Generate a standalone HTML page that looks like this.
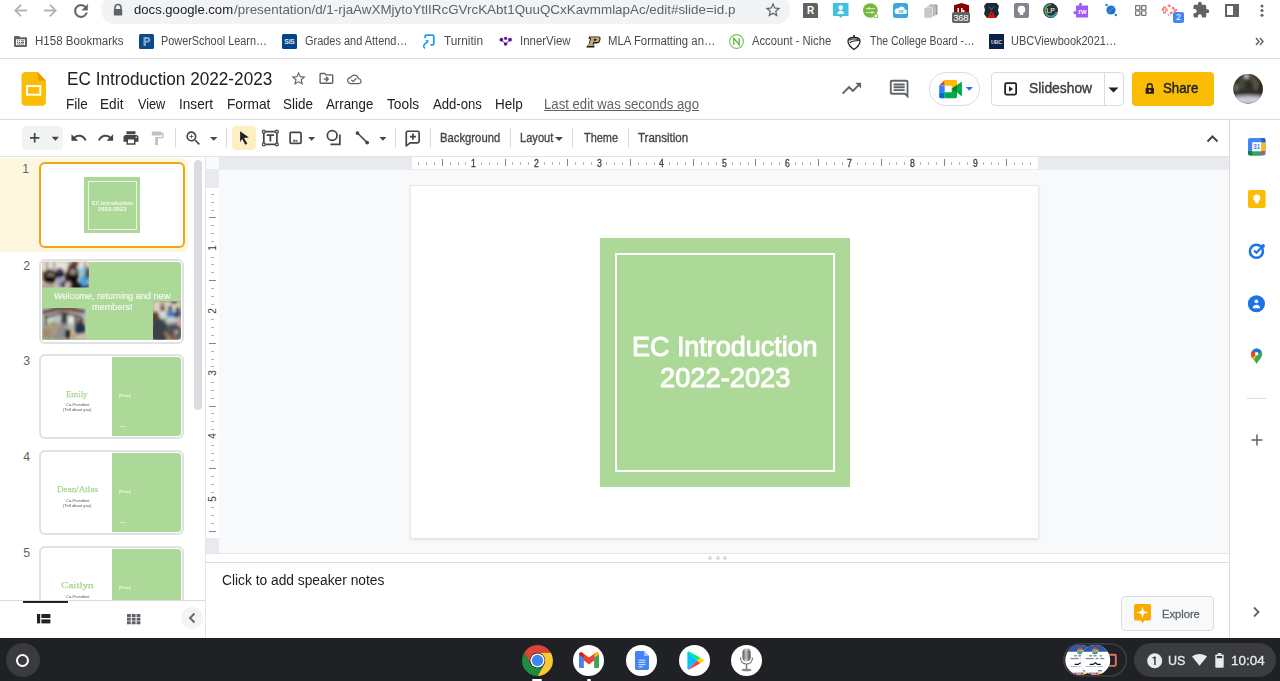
<!DOCTYPE html><html><head><meta charset='utf-8'><style>
*{box-sizing:border-box}
html,body{margin:0;padding:0;width:1280px;height:681px;overflow:hidden;background:#fff;font-family:'Liberation Sans',sans-serif;position:relative}
.a{position:absolute}
.t{position:absolute;line-height:0;white-space:nowrap;transform-origin:0 0}
svg{position:absolute;overflow:visible}
</style></head><body><div class="a" style="left:101px;top:-4px;width:689px;height:28px;border-radius:14px;background:#f1f3f4"></div>
<div class="t" style="left:134.00px;top:10.32px;font-family:'Liberation Sans';font-size:13.5px;font-weight:normal;color:#202124;transform:scaleX(0.9706);">docs.google.com</div>
<div class="t" style="left:234.00px;top:10.32px;font-family:'Liberation Sans';font-size:13.5px;font-weight:normal;color:#5f6368;transform:scaleX(0.9921);">/presentation/d/1-rjaAwXMjytoYtlIRcGVrcKAbt1QuuQCxKavmmlapAc/edit#slide=id.p</div>
<svg style="left:11px;top:1px" width="19" height="19" viewBox="0 0 24 24"><path d="M20 11H7.83l5.59-5.59L12 4l-8 8 8 8 1.41-1.41L7.83 13H20v-2z" fill="#aeb1b5" stroke="#aeb1b5" stroke-width=".4"/></svg>
<svg style="left:41px;top:1px" width="19" height="19" viewBox="0 0 24 24"><path d="M12 4l-1.41 1.41L16.17 11H4v2h12.17l-5.58 5.59L12 20l8-8z" fill="#aeb1b5" stroke="#aeb1b5" stroke-width=".4"/></svg>
<svg style="left:70.5px;top:0.5px" width="20" height="20" viewBox="0 0 24 24"><path d="M17.65 6.35A7.958 7.958 0 0 0 12 4c-4.42 0-7.99 3.58-7.99 8s3.57 8 7.99 8c3.73 0 6.84-2.55 7.73-6h-2.08A5.99 5.99 0 0 1 12 18c-3.31 0-6-2.69-6-6s2.69-6 6-6c1.66 0 3.14.69 4.22 1.78L13 11h7V4l-2.35 2.35z" fill="#5f6368" stroke="#5f6368" stroke-width=".5"/></svg>
<svg style="left:113px;top:4px" width="10" height="12" viewBox="0 0 10 12"><path d="M2 5V3.5a3 3 0 0 1 6 0V5" stroke="#5f6368" stroke-width="1.6" fill="none"/><rect x="0.8" y="5" width="8.4" height="6.6" rx="0.8" fill="#5f6368"/></svg>
<svg style="left:764px;top:1px" width="18" height="18" viewBox="0 0 24 24"><path d="M22 9.24l-7.19-.62L12 2 9.19 8.63 2 9.24l5.46 4.73L5.82 21 12 17.27 18.18 21l-1.63-7.03L22 9.24zM12 15.4l-3.76 2.27 1-4.28-3.32-2.88 4.38-.38L12 6.1l1.71 4.04 4.38.38-3.32 2.88 1 4.28L12 15.4z" fill="#5f6368"/></svg>
<div class="a" style="left:803px;top:3px;width:15px;height:15px;background:#616161;border-radius:1px 2px 0 0"></div>
<div class="a" style="left:803px;top:3px;width:15px;height:15px;color:#fff;font:bold 10px 'Liberation Sans';line-height:15px;text-align:center">R</div>
<svg style="left:833px;top:3px" width="16" height="16" viewBox="0 0 16 16"><path d="M0 0h15.5v13H9.5L7.75 15 6 13H0z" fill="#41c0e4"/><circle cx="7.75" cy="4.6" r="2.3" fill="#fff"/><path d="M4.5 11c0-2.2 1.4-3.6 3.25-3.6S11 8.8 11 11z" fill="#fff"/></svg>
<svg style="left:863px;top:3px" width="16" height="16" viewBox="0 0 16 16"><circle cx="7.3" cy="7.5" r="7.3" fill="#76b83c"/><path d="M3 5.5h9M3 9.5h9" stroke="#d7edc0" stroke-width="0.9"/><circle cx="6" cy="5.5" r="1.1" fill="none" stroke="#d7edc0" stroke-width=".8"/><circle cx="9" cy="9.5" r="1.1" fill="none" stroke="#d7edc0" stroke-width=".8"/><path d="M11 11.5h4v3.5h-4z" fill="#76b83c"/><circle cx="12.8" cy="13" r="1.5" fill="#fff"/></svg>
<svg style="left:893px;top:3px" width="15" height="15" viewBox="0 0 15 15"><rect width="15" height="15" rx="2.5" fill="#3ca7da"/><path d="M3.5 11h8.2a2.3 2.3 0 0 0 .2-4.6A3.3 3.3 0 0 0 5.6 5.5 2.8 2.8 0 0 0 3.5 11z" fill="#fff"/><text x="8" y="9.7" font-size="4.5" font-family="Liberation Sans" fill="#3ca7da" font-weight="bold" text-anchor="middle">ce</text></svg>
<svg style="left:924px;top:3.5px" width="14" height="14" viewBox="0 0 14 14"><rect x="5" y="0.5" width="8.5" height="10.5" rx="1" fill="#9e9e9e"/><rect x="2.6" y="2" width="8.5" height="10.5" rx="1" fill="#b5b5b5" stroke="#fff" stroke-width=".5"/><rect x="0" y="3.5" width="8.5" height="10.5" rx="1" fill="#c8c8c8" stroke="#fff" stroke-width=".5"/></svg>
<svg style="left:953.5px;top:3px" width="15" height="10" viewBox="0 0 15 10"><path d="M0 2.2L7.5 0 15 2.2V10H0z" fill="#8b0000"/><rect x="3.5" y="5" width="1.5" height="5" fill="#fff"/><rect x="7" y="5" width="1.5" height="5" fill="#fff"/><rect x="8.5" y="7" width="2" height="3" fill="#fff"/></svg>
<div class="a" style="left:951.5px;top:12px;width:18.5px;height:11px;background:#5f6368;border-radius:2px;color:#fff;font:9.5px 'Liberation Sans';line-height:11px;text-align:center;letter-spacing:-0.3px">368</div>
<svg style="left:983.5px;top:3px" width="15" height="15" viewBox="0 0 15 15"><path d="M2.5 0h10l2.5 3-1 4 1 4-3 4H3L0 11l1-4-1-4z" fill="#1c2a33"/><path d="M7.5 7.5L12 15H3z" fill="#e01010"/><path d="M7.5 10.5v2" stroke="#1c2a33" stroke-width="1"/><path d="M5 3.5l2.5 3 2.5-3" stroke="#6b7880" stroke-width=".8" fill="none"/></svg>
<svg style="left:1013.5px;top:3px" width="15" height="15" viewBox="0 0 15 15"><rect width="15" height="15" rx="2" fill="#80868b"/><circle cx="7.5" cy="6.5" r="3.8" fill="#fff"/><rect x="5.8" y="9.5" width="3.4" height="2.5" fill="#fff"/></svg>
<svg style="left:1043px;top:3px" width="16" height="16" viewBox="0 0 16 16"><circle cx="7.6" cy="7.5" r="7.4" fill="#2d3236"/><path d="M8 1.6A5.9 5.9 0 1 0 13.6 9" stroke="#4fd05c" stroke-width="1.3" fill="none"/><path d="M13.6 9A5.9 5.9 0 0 1 4 12.2" stroke="#2ea0c8" stroke-width="1.3" fill="none"/><text x="7.6" y="10.3" font-size="7" font-family="Liberation Sans" fill="#fff" text-anchor="middle">LP</text></svg>
<svg style="left:1073px;top:3px" width="16" height="16" viewBox="0 0 16 16"><path d="M3 2.5h3.6a1.5 1.5 0 1 1 1.8 0H15v12H3v-3.8a1.5 1.5 0 1 1 0-2.2z" fill="#a35bf5"/><text x="9.3" y="11.3" font-size="7" font-weight="bold" font-family="Liberation Sans" fill="#fff" text-anchor="middle">rw</text></svg>
<svg style="left:1105px;top:3px" width="13" height="14" viewBox="0 0 13 14"><circle cx="6" cy="7" r="4.6" fill="#1f74c4"/><path d="M2.5 10.5L9.5 3.5" stroke="#6fb0e8" stroke-width=".6"/><circle cx="1.5" cy="2" r="1.3" fill="#1f8ad4"/><circle cx="10.8" cy="12" r="1.3" fill="#1f8ad4"/></svg>
<svg style="left:1135px;top:5px" width="12" height="11" viewBox="0 0 12 11"><g fill="none" stroke="#6f7378" stroke-width="1.2"><rect x=".6" y=".6" width="4.3" height="4.3" rx=".5"/><rect x="6.6" y=".6" width="4.3" height="4.3" rx=".5"/><rect x=".6" y="6" width="4.3" height="4.3" rx=".5"/><rect x="6.6" y="6" width="4.3" height="4.3" rx=".5"/></g></svg>
<svg style="left:1163px;top:4px" width="14" height="12" viewBox="0 0 14 12"><path d="M0 3.5h3.5V8.5H0zM5 1l8 5-8 5" fill="none" stroke="#ff7b7b" stroke-width="2.2" stroke-dasharray="3 1.5"/></svg>
<div class="a" style="left:1173px;top:12px;width:11px;height:11px;background:#4285f4;border-radius:2px;color:#fff;font:9px 'Liberation Sans';line-height:11px;text-align:center">2</div>
<svg style="left:1192px;top:1px" width="18" height="18" viewBox="0 0 24 24"><path d="M20.5 11H19V7c0-1.1-.9-2-2-2h-4V3.5a2.5 2.5 0 0 0-5 0V5H4c-1.1 0-1.99.9-1.99 2v3.8H3.5c1.49 0 2.7 1.21 2.7 2.7s-1.21 2.7-2.7 2.7H2V20c0 1.1.9 2 2 2h3.8v-1.5c0-1.49 1.21-2.7 2.7-2.7 1.49 0 2.7 1.21 2.7 2.7V22H17c1.1 0 2-.9 2-2v-4h1.5a2.5 2.5 0 0 0 0-5z" fill="#5f6368"/></svg>
<svg style="left:1224.5px;top:4px" width="14" height="13" viewBox="0 0 14 13"><rect x="1" y="1" width="12" height="11" fill="none" stroke="#5f6368" stroke-width="2"/><rect x="8" y="1" width="5" height="11" fill="#5f6368"/></svg>
<svg style="left:1259.5px;top:4px" width="4" height="14" viewBox="0 0 4 14"><circle cx="2" cy="2" r="1.5" fill="#5f6368"/><circle cx="2" cy="6.6" r="1.5" fill="#5f6368"/><circle cx="2" cy="11.2" r="1.5" fill="#5f6368"/></svg>
<div class="a" style="left:0;top:58px;width:1280px;height:1px;background:#dadce0"></div>
<div class="t" style="left:35.04px;top:40.84px;font-family:'Liberation Sans';font-size:12px;font-weight:normal;color:#474a4e;transform:scaleX(0.9626);">H158 Bookmarks</div>
<div class="t" style="left:160.69px;top:40.84px;font-family:'Liberation Sans';font-size:12px;font-weight:normal;color:#474a4e;transform:scaleX(0.9070);">PowerSchool Learn…</div>
<div class="t" style="left:304.60px;top:40.84px;font-family:'Liberation Sans';font-size:12px;font-weight:normal;color:#474a4e;transform:scaleX(0.9135);">Grades and Attend…</div>
<div class="t" style="left:444.30px;top:40.84px;font-family:'Liberation Sans';font-size:12px;font-weight:normal;color:#474a4e;transform:scaleX(0.9846);">Turnitin</div>
<div class="t" style="left:519.85px;top:40.84px;font-family:'Liberation Sans';font-size:12px;font-weight:normal;color:#474a4e;transform:scaleX(0.9519);">InnerView</div>
<div class="t" style="left:607.55px;top:40.84px;font-family:'Liberation Sans';font-size:12px;font-weight:normal;color:#474a4e;transform:scaleX(0.9468);">MLA Formatting an…</div>
<div class="t" style="left:752.20px;top:40.84px;font-family:'Liberation Sans';font-size:12px;font-weight:normal;color:#474a4e;transform:scaleX(0.9341);">Account - Niche</div>
<div class="t" style="left:870.00px;top:40.84px;font-family:'Liberation Sans';font-size:12px;font-weight:normal;color:#474a4e;transform:scaleX(0.8754);">The College Board -…</div>
<div class="t" style="left:1010.89px;top:40.84px;font-family:'Liberation Sans';font-size:12px;font-weight:normal;color:#474a4e;transform:scaleX(0.9132);">UBCViewbook2021…</div>
<svg style="left:14px;top:35.5px" width="13" height="11" viewBox="0 0 13 11"><path d="M0 1.2C0 .5.5 0 1.2 0h3.8l1.3 1.3h5.5c.7 0 1.2.5 1.2 1.2v7.3c0 .7-.5 1.2-1.2 1.2H1.2C.5 11 0 10.5 0 9.8z" fill="#5f6368"/><rect x="2" y="3.3" width="9" height="5.8" fill="#fff"/><g fill="#5f6368"><rect x="3" y="4.3" width="1.2" height="1"/><rect x="5" y="4.3" width="1.2" height="1"/><rect x="7" y="4.3" width="3" height="1"/><rect x="3" y="6" width="1.2" height="1"/><rect x="5" y="6" width="1.2" height="1"/><rect x="7" y="6" width="3" height="1"/><rect x="3" y="7.6" width="7" height=".8"/></g></svg>
<svg style="left:139px;top:34px" width="15" height="15" viewBox="0 0 15 15"><rect width="15" height="15" rx="1.5" fill="#0b4b8c"/><path d="M4.5 3h4a2.8 2.8 0 0 1 0 5.6H7V12H4.5z M7 5v1.7h1.3a.85.85 0 0 0 0-1.7z" fill="#7ea6cf" fill-rule="evenodd"/></svg>
<svg style="left:281.5px;top:33.8px" width="15" height="15" viewBox="0 0 15 15"><rect width="15" height="15" rx="1.5" fill="#004585"/><text x="7.5" y="10.2" font-size="6.8" font-weight="bold" font-family="Liberation Sans" fill="#dde6f0" text-anchor="middle" letter-spacing="-.2">SIS</text></svg>
<svg style="left:423px;top:34px" width="12" height="15" viewBox="0 0 12 15"><path d="M2.2 3.6V2.2c0-.6.4-1 1-1h6.6c.6 0 1 .4 1 1V9.8c0 .6-.4 1-1 1H8" stroke="#1ba1f7" stroke-width="1.8" fill="none" stroke-linecap="round"/><path d="M1.5 14C0 12.5.5 10.5 3.5 8.5" stroke="#1ba1f7" stroke-width="1.6" fill="none" stroke-linecap="round"/><path d="M2.2 6.2L5.6 6 5 9.5z" fill="#1ba1f7"/></svg>
<svg style="left:499px;top:36px" width="14" height="10" viewBox="0 0 14 10"><g fill="#5e1597"><circle cx="2.4" cy="3.7" r="1.9"/><circle cx="6.6" cy="2.3" r="1.6"/><circle cx="11" cy="3.7" r="1.9"/><circle cx="6.6" cy="8" r="1.8"/></g><path d="M2.4 3.7L6.6 8 11 3.7" stroke="#5e1597" stroke-width=".9" fill="none"/></svg>
<svg style="left:586px;top:35.5px" width="15" height="12" viewBox="0 0 15 12"><path d="M3 .5h9.5c1.8 0 2.3 1.2 2 2.6l-.3 1.4c-.4 1.9-1.6 2.9-3.8 2.9H8l-.6 2.2h1.2L8.2 11.5H.5l.5-1.9h1.3L4 3H2.6z" fill="#1a1a1a"/><path d="M4 1.3h8.2c1.2 0 1.5.7 1.3 1.7l-.25 1.2c-.3 1.3-1 1.9-2.6 1.9H7.3l-.7 2.8h1.1l-.3 1.2H1.5l.25-1.1h1.2L5.2 2.2H3.8z M8.2 2.7L7.7 4.8h1.6c.6 0 .9-.3 1-.8l.15-.5c.1-.5-.1-.8-.6-.8z" fill="#c5a96f" fill-rule="evenodd"/></svg>
<svg style="left:729px;top:33.8px" width="15" height="15" viewBox="0 0 15 15"><circle cx="7.5" cy="7.5" r="6.9" fill="none" stroke="#72c45a" stroke-width="1.1"/><path d="M4.8 11V4.2L10.2 11V4.2" fill="none" stroke="#5ab548" stroke-width="1.3"/></svg>
<svg style="left:847px;top:33.5px" width="14" height="16" viewBox="0 0 14 16"><path d="M7 3.5C3.8 3.5 1 4.8 1 7.2c0 3 2.7 6 6 8.3 3.3-2.3 6-5.3 6-8.3C13 4.8 10.2 3.5 7 3.5z" fill="none" stroke="#222" stroke-width="1.3"/><path d="M2.3 6.3C3 5.4 5 5 7 5s4 .4 4.7 1.3C10.5 6.8 8.8 7 7 7 4.8 7 3.5 7.8 3 9" fill="none" stroke="#222" stroke-width="1.1"/><path d="M6.5 3.5L7.5 1" stroke="#222" stroke-width="1.6"/></svg>
<svg style="left:989px;top:33.8px" width="15" height="15" viewBox="0 0 15 15"><rect width="15" height="15" fill="#0c2148"/><text x="7.5" y="9.8" font-size="5.6" font-weight="bold" font-family="Liberation Sans" fill="#c8d0dc" text-anchor="middle" letter-spacing="-.3">UBC</text></svg>
<svg style="left:1255px;top:36.5px" width="10" height="9" viewBox="0 0 10 9"><path d="M1 1l3 3.5L1 8M5 1l3 3.5L5 8" fill="none" stroke="#5f6368" stroke-width="1.5"/></svg>
<div class="t" style="left:67.06px;top:78.69px;font-family:'Liberation Sans';font-size:18.2px;font-weight:normal;color:#202124;transform:scaleX(0.9444);">EC Introduction 2022-2023</div>
<div class="t" style="left:66.07px;top:103.58px;font-family:'Liberation Sans';font-size:14.5px;font-weight:normal;color:#202124;transform:scaleX(0.9318);">File</div>
<div class="t" style="left:100.31px;top:103.58px;font-family:'Liberation Sans';font-size:14.5px;font-weight:normal;color:#202124;transform:scaleX(0.9375);">Edit</div>
<div class="t" style="left:137.50px;top:103.58px;font-family:'Liberation Sans';font-size:14.5px;font-weight:normal;color:#202124;transform:scaleX(0.8750);">View</div>
<div class="t" style="left:179.06px;top:103.58px;font-family:'Liberation Sans';font-size:14.5px;font-weight:normal;color:#202124;transform:scaleX(0.9375);">Insert</div>
<div class="t" style="left:226.56px;top:103.58px;font-family:'Liberation Sans';font-size:14.5px;font-weight:normal;color:#202124;transform:scaleX(0.9444);">Format</div>
<div class="t" style="left:282.82px;top:103.58px;font-family:'Liberation Sans';font-size:14.5px;font-weight:normal;color:#202124;transform:scaleX(0.9274);">Slide</div>
<div class="t" style="left:326.25px;top:103.58px;font-family:'Liberation Sans';font-size:14.5px;font-weight:normal;color:#202124;transform:scaleX(0.9167);">Arrange</div>
<div class="t" style="left:387.20px;top:103.58px;font-family:'Liberation Sans';font-size:14.5px;font-weight:normal;color:#202124;transform:scaleX(0.9471);">Tools</div>
<div class="t" style="left:433.40px;top:103.58px;font-family:'Liberation Sans';font-size:14.5px;font-weight:normal;color:#202124;transform:scaleX(0.9056);">Add-ons</div>
<div class="t" style="left:495.07px;top:103.58px;font-family:'Liberation Sans';font-size:14.5px;font-weight:normal;color:#202124;transform:scaleX(0.9310);">Help</div>
<div class="t" style="left:543.70px;top:103.58px;font-family:'Liberation Sans';font-size:14.5px;font-weight:normal;color:#5f6368;transform:scaleX(0.9070);text-decoration:underline;">Last edit was seconds ago</div>
<div class="a" style="left:0;top:119px;width:1280px;height:1px;background:#dadce0"></div>
<div class="a" style="left:929px;top:72px;width:51px;height:34px;border-radius:17px;border:1px solid #dadce0"></div>
<div class="a" style="left:991px;top:72px;width:133px;height:34px;border-radius:4px;border:1px solid #dadce0"></div>
<div class="a" style="left:1104px;top:72px;width:1px;height:34px;background:#dadce0"></div>
<div class="t" style="left:1029.25px;top:87.95px;font-family:'Liberation Sans';font-size:14px;font-weight:normal;color:#3c4043;transform:scaleX(0.9883);-webkit-text-stroke:0.4px #3c4043;">Slideshow</div>
<div class="a" style="left:1132px;top:72px;width:82px;height:34px;border-radius:4px;background:#fbbc04"></div>
<div class="t" style="left:1162.75px;top:87.95px;font-family:'Liberation Sans';font-size:14px;font-weight:normal;color:#202124;transform:scaleX(0.9459);-webkit-text-stroke:0.4px #202124;">Share</div>
<svg style="left:1228px;top:70px" width="40" height="38" viewBox="0 0 717 681"><defs><clipPath id="avc"><circle cx="360" cy="338" r="265"/></clipPath><filter id="avb" x="-20%" y="-20%" width="140%" height="140%"><feGaussianBlur stdDeviation="30"/></filter></defs><g clip-path="url(#avc)"><rect x="0" y="0" width="717" height="681" fill="#35342c"/><g filter="url(#avb)"><ellipse cx="330" cy="110" rx="40" ry="50" fill="#c8ccd0"/><ellipse cx="420" cy="150" rx="60" ry="80" fill="#5a4a38"/><ellipse cx="250" cy="230" rx="50" ry="120" fill="#4a4a3a"/><ellipse cx="500" cy="260" rx="40" ry="100" fill="#5a5a48"/><ellipse cx="150" cy="320" rx="40" ry="80" fill="#6a6e68"/><ellipse cx="380" cy="250" rx="30" ry="90" fill="#2a2620"/><ellipse cx="580" cy="330" rx="40" ry="90" fill="#28261e"/><rect x="100" y="380" width="520" height="80" fill="#2e2a22"/><path d="M60 470Q360 430 660 470V681H60z" fill="#aab0b8"/><path d="M120 520Q360 490 600 520V560Q360 540 120 560z" fill="#dde2e8"/><path d="M150 590Q360 570 570 590V620H150z" fill="#c0c6ce"/></g></g></svg>
<svg style="left:0;top:55px" width="140" height="70" viewBox="0 0 1280 640"><path d="M230 155h115l75 80v195c0 19-16 35-35 35H232c-19 0-35-16-35-35V190c0-19 16-35 33-35z" fill="#fbbc04"/><path d="M345 155l75 80h-55c-11 0-20-9-20-20z" fill="#f29900"/><rect x="247" y="284" width="122" height="79" fill="none" stroke="#fff" stroke-width="18"/></svg>
<svg style="left:289.6px;top:69.8px" width="17.2" height="17.2" viewBox="0 0 24 24"><path d="M22 9.24l-7.19-.62L12 2 9.19 8.63 2 9.24l5.46 4.73L5.82 21 12 17.27 18.18 21l-1.63-7.03L22 9.24zM12 15.4l-3.76 2.27 1-4.28-3.32-2.88 4.38-.38L12 6.1l1.71 4.04 4.38.38-3.32 2.88 1 4.28L12 15.4z" fill="#5f6368"/></svg>
<svg style="left:317.6px;top:70.3px" width="16.8" height="16.8" viewBox="0 0 24 24"><path d="M20 6h-8l-2-2H4c-1.1 0-1.99.9-1.99 2L2 18c0 1.1.9 2 2 2h16c1.1 0 2-.9 2-2V8c0-1.1-.9-2-2-2zm0 12H4V6h5.17l2 2H20v10zm-7.84-6H8v2h4.16l-1.59 1.59L11.99 17 16 13.01 11.99 9l-1.41 1.41L12.16 12z" fill="#5f6368"/></svg>
<svg style="left:347.2px;top:71.5px" width="14.7" height="14.7" viewBox="0 0 24 24"><path d="M19.35 10.04A7.49 7.49 0 0 0 12 4C9.11 4 6.6 5.64 5.35 8.04A5.994 5.994 0 0 0 0 14c0 3.31 2.69 6 6 6h13c2.76 0 5-2.24 5-5 0-2.64-2.05-4.78-4.65-4.96zM19 18H6c-2.21 0-4-1.790-4-4 0-2.05 1.53-3.76 3.56-3.970l1.07-.11.5-.95A5.469 5.469 0 0 1 12 6c2.62 0 4.88 1.86 5.39 4.43l.3 1.5 1.53.11A2.98 2.98 0 0 1 22 15c0 1.65-1.35 3-3 3zm-9-3.82l-2.09-2.09L6.5 13.5 10 17l6.01-6.01-1.41-1.41z" fill="#5f6368"/></svg>
<svg style="left:839.8px;top:77.1px" width="23" height="23" viewBox="0 0 24 24"><path d="M16 6l2.29 2.29-4.88 4.88-4-4L2 16.59 3.41 18l6-6 4 4 6.3-6.29L22 12V6z" fill="#5f6368"/></svg>
<svg style="left:887.9px;top:77.9px" width="22.3" height="22.3" viewBox="0 0 24 24"><path d="M21.99 4c0-1.1-.89-2-1.99-2H4c-1.1 0-2 .9-2 2v12c0 1.1.9 2 2 2h14l4 4-.01-18zM20 4v13.17L18.83 16H4V4h16zM6 12h12v2H6zm0-3h12v2H6zm0-3h12v2H6z" fill="#5f6368"/></svg>
<svg style="left:935px;top:75px" width="50" height="30" viewBox="0 0 1135 681"><path d="M220 115L95 235h125z" fill="#ea4335"/><path d="M220 115h250c17 0 30 13 30 30v80l-120 85v-65H220z" fill="#ffba00"/><path d="M95 235h125v165H95z" fill="#2684fc"/><path d="M95 400h125v125h-95c-17 0-30-13-30-30z" fill="#0066da"/><path d="M220 390h160v-80l120-85v270c0 17-13 30-30 30H220z" fill="#00ac47"/><path d="M380 310l120-85v175z" fill="#00832d"/><path d="M500 225l110-75v340l-110-90z" fill="#00ac47"/><path d="M700 275h160l-80 80z" fill="#1a73e8"/></svg>
<svg style="left:995px;top:75px" width="30" height="30" viewBox="0 0 681 681"><rect x="230" y="185" width="250" height="260" rx="28" fill="none" stroke="#202124" stroke-width="40"/><path d="M318 255v125l92-62z" fill="#202124"/></svg>
<svg style="left:1104px;top:72px" width="20" height="34" viewBox="0 0 20 34"><path d="M4.5 15.5h10l-5 5z" fill="#202124"/></svg>
<svg style="left:1144px;top:82px" width="12" height="13" viewBox="0 0 12 13"><path d="M3.4 6.5V4.2a2.4 2.4 0 0 1 4.8 0v2.3" fill="none" stroke="#202124" stroke-width="1.4"/><rect x="1.6" y="6.1" width="8.4" height="5.65" rx=".6" fill="#202124"/><circle cx="5.8" cy="8.9" r="1.1" fill="#fbbc04"/></svg>
<div class="a" style="left:22px;top:126px;width:41px;height:24px;border-radius:4px;background:#f1f3f4"></div>
<div class="a" style="left:232px;top:126px;width:24px;height:24px;border-radius:4px;background:#feefc3"></div>
<div class="a" style="left:175px;top:128px;width:1px;height:20px;background:#dadce0"></div>
<div class="a" style="left:226px;top:128px;width:1px;height:20px;background:#dadce0"></div>
<div class="a" style="left:395px;top:128px;width:1px;height:20px;background:#dadce0"></div>
<div class="a" style="left:430px;top:128px;width:1px;height:20px;background:#dadce0"></div>
<div class="a" style="left:510px;top:128px;width:1px;height:20px;background:#dadce0"></div>
<div class="a" style="left:572px;top:128px;width:1px;height:20px;background:#dadce0"></div>
<div class="a" style="left:628px;top:128px;width:1px;height:20px;background:#dadce0"></div>
<div class="t" style="left:439.93px;top:137.50px;font-family:'Liberation Sans';font-size:13px;font-weight:normal;color:#444746;transform:scaleX(0.8676);-webkit-text-stroke:0.35px #444746;">Background</div>
<div class="t" style="left:520.45px;top:137.50px;font-family:'Liberation Sans';font-size:13px;font-weight:normal;color:#444746;transform:scaleX(0.8538);-webkit-text-stroke:0.35px #444746;">Layout</div>
<div class="t" style="left:584.00px;top:137.50px;font-family:'Liberation Sans';font-size:13px;font-weight:normal;color:#444746;transform:scaleX(0.8400);-webkit-text-stroke:0.35px #444746;">Theme</div>
<div class="t" style="left:638.40px;top:137.50px;font-family:'Liberation Sans';font-size:13px;font-weight:normal;color:#444746;transform:scaleX(0.8857);-webkit-text-stroke:0.35px #444746;">Transition</div>
<div class="a" style="left:0;top:156px;width:1229px;height:1px;background:#e0e2e6"></div>
<svg style="left:20px;top:125px" width="100" height="27" viewBox="0 0 1280 345.6"><path d="M177 103h22v50h49v22h-49v50h-22v-50h-49v-22h49z" fill="#444746"/><path d="M405 150h95l-47.5 50z" fill="#444746"/></svg>
<svg style="left:69.5px;top:128.5px" width="17.6" height="17.6" viewBox="0 0 24 24"><path d="M12.5 8c-2.65 0-5.05.99-6.9 2.6L2 7v9h9l-3.62-3.62c1.39-1.16 3.16-1.880 5.12-1.88 3.54 0 6.55 2.31 7.6 5.5l2.37-.78C21.08 11.03 17.15 8 12.5 8z" fill="#444746"/></svg>
<svg style="left:96.5px;top:128.5px" width="17.6" height="17.6" viewBox="0 0 24 24"><path d="M18.4 10.6C16.55 8.99 14.15 8 11.5 8c-4.65 0-8.58 3.03-9.960 7.22L3.9 16c1.05-3.19 4.05-5.5 7.6-5.5 1.95 0 3.73.72 5.12 1.88L13 16h9V7l-3.6 3.6z" fill="#444746"/></svg>
<svg style="left:122.4px;top:128.9px" width="18" height="18" viewBox="0 0 24 24"><path d="M19 8H5c-1.66 0-3 1.34-3 3v6h4v4h12v-4h4v-6c0-1.66-1.34-3-3-3zm-3 11H8v-5h8v5zm3-7c-.55 0-1-.45-1-1s.45-1 1-1 1 .45 1 1-.45 1-1 1zm-1-9H6v4h12V3z" fill="#444746"/></svg>
<svg style="left:149.2px;top:129.9px" width="16.5" height="16.5" viewBox="0 0 24 24"><path d="M18 4V3c0-.55-.45-1-1-1H5c-.55 0-1 .45-1 1v4c0 .55.45 1 1 1h12c.55 0 1-.45 1-1V6h1v4H9v11c0 .55.45 1 1 1h2c.55 0 1-.45 1-1v-9h8V4h-3z" fill="#bdc1c6"/></svg>
<svg style="left:184.4px;top:128.7px" width="18.7" height="18.7" viewBox="0 0 24 24"><path d="M15.5 14h-.79l-.28-.27A6.471 6.471 0 0 0 16 9.5 6.5 6.5 0 1 0 9.5 16c1.61 0 3.09-.59 4.23-1.57l.27.28v.79l5 4.99L20.49 19l-4.99-5zm-6 0C7.01 14 5 11.990 5 9.5S7.01 5 9.5 5 14 7.01 14 9.5 11.99 14 9.5 14zm2.5-4h-2v2H9v-2H7V9h2V7h1v2h2v1z" fill="#444746"/></svg>
<svg style="left:210px;top:137px" width="8" height="4" viewBox="0 0 8 4"><path d="M0 0h7.4L3.7 3.7z" fill="#444746"/></svg>
<svg style="left:228px;top:125px" width="100" height="27" viewBox="0 0 1280 345.6"><path d="M155 80L268 160 205 165 248 240 222 252 182 180 155 218z" fill="#202124"/><rect x="458" y="85" width="168" height="163" fill="none" stroke="#444746" stroke-width="22"/><g fill="#fff" stroke="#444746" stroke-width="16"><circle cx="458" cy="85" r="18"/><circle cx="626" cy="85" r="18"/><circle cx="458" cy="248" r="18"/><circle cx="626" cy="248" r="18"/></g><path d="M495 118h95v22h-36v70h-23v-70h-36z" fill="#444746"/><rect x="795" y="95" width="140" height="140" rx="14" fill="none" stroke="#444746" stroke-width="22"/><path d="M825 210l20-28 18 20 14-14 22 22z" fill="#444746"/><path d="M1025 155h90l-45 45z" fill="#444746"/></svg>
<svg style="left:325px;top:125px" width="100" height="27" viewBox="0 0 1280 345.6"><circle cx="92" cy="135" r="62" fill="none" stroke="#444746" stroke-width="22"/><path d="M190 122v125H70" fill="none" stroke="#444746" stroke-width="22"/><path d="M415 103L540 225" stroke="#444746" stroke-width="20"/><circle cx="415" cy="103" r="24" fill="#444746"/><circle cx="540" cy="225" r="24" fill="#444746"/><path d="M697 155h90l-45 45z" fill="#444746"/><path d="M1055 80h130c11 0 20 9 20 20v108c0 11-9 20-20 20H1090l-50 40V100c0-11 9-20 20-20z" fill="none" stroke="#444746" stroke-width="22" stroke-linejoin="round"/><path d="M1114 110h22v28h28v22h-28v28h-22v-28h-28v-22h28z" fill="#444746"/></svg>
<svg style="left:555px;top:137px" width="8" height="4" viewBox="0 0 8 4"><path d="M0 0h8L4 4z" fill="#444746"/></svg>
<svg style="left:1206px;top:133.5px" width="13" height="9" viewBox="0 0 13 9"><path d="M1.5 7.5L6.5 2.5l5 5" fill="none" stroke="#444746" stroke-width="2"/></svg>
<div class="a" style="left:1229px;top:120px;width:1px;height:518px;background:#dadce0"></div>
<div class="a" style="left:0;top:158px;width:188px;height:94px;background:#fef7e0;border-radius:0 6px 6px 0"></div>
<div class="a" style="left:205px;top:157px;width:1px;height:481px;background:#e3e5e8"></div>
<div class="a" style="left:0;top:600px;width:205px;height:1px;background:#dadce0"></div>
<div class="a" style="left:194px;top:160px;width:8px;height:250px;border-radius:4px;background:#dadce0"></div>
<div class="a" style="left:38.8px;top:162px;width:146px;height:86.3px;border:2px solid #eea616;border-radius:6px;background:#fff"></div>
<div class="a" style="left:84.4px;top:177.1px;width:55.9px;height:56.3px;background:#acd998"></div>
<div class="a" style="left:87.8px;top:180.5px;width:49.1px;height:49.5px;border:1px solid rgba(255,255,255,.75)"></div>
<div class="t" style="left:91.90px;top:202.86px;font-family:'Liberation Sans';font-size:5.6px;font-weight:bold;color:#f4faf0;transform:scaleX(0.9762);">EC Introduction</div>
<div class="t" style="left:98.00px;top:208.86px;font-family:'Liberation Sans';font-size:5.6px;font-weight:bold;color:#f4faf0;transform:scaleX(1.0630);">2022-2023</div>
<div class="t" style="left:22.20px;top:169.44px;font-family:'Liberation Sans';font-size:12.3px;font-weight:normal;color:#5f6368;">1</div>
<div class="t" style="left:23.20px;top:266.04px;font-family:'Liberation Sans';font-size:12.3px;font-weight:normal;color:#5f6368;">2</div>
<div class="t" style="left:23.20px;top:361.34px;font-family:'Liberation Sans';font-size:12.3px;font-weight:normal;color:#5f6368;">3</div>
<div class="t" style="left:23.20px;top:457.14px;font-family:'Liberation Sans';font-size:12.3px;font-weight:normal;color:#5f6368;">4</div>
<div class="t" style="left:23.20px;top:553.24px;font-family:'Liberation Sans';font-size:12.3px;font-weight:normal;color:#5f6368;">5</div>
<div class="a" style="left:39.2px;top:259.1px;width:144.8px;height:85px;border:2px solid #dfe1e5;border-radius:6px;background:#fff"></div>
<div class="a" style="left:39.2px;top:354.4px;width:144.8px;height:85px;border:2px solid #dfe1e5;border-radius:6px;background:#fff"></div>
<div class="a" style="left:39.2px;top:450.2px;width:144.8px;height:85px;border:2px solid #dfe1e5;border-radius:6px;background:#fff"></div>
<div class="a" style="left:39.2px;top:546.3px;width:144.8px;height:85px;border:2px solid #dfe1e5;border-radius:6px;background:#fff"></div>
<div class="a" style="left:42.1px;top:261.8px;width:138.7px;height:78px;background:#acd998;border-radius:0 3px 3px 0"></div>
<svg style="left:40px;top:260px" width="52" height="30" viewBox="0 0 1180 681"><defs><clipPath id="c1"><rect x="47" y="40" width="1066" height="586"/></clipPath><filter id="bl1" x="-10%" y="-10%" width="120%" height="120%"><feGaussianBlur stdDeviation="32"/></filter></defs><g clip-path="url(#c1)"><rect x="0" y="0" width="1180" height="681" fill="#cfc2ae"/><g filter="url(#bl1)"><rect x="47" y="40" width="1066" height="200" fill="#e9e2d6"/><rect x="140" y="40" width="40" height="300" fill="#777"/><rect x="300" y="40" width="40" height="250" fill="#888"/><rect x="640" y="40" width="40" height="250" fill="#777"/><rect x="1000" y="40" width="40" height="300" fill="#777"/><ellipse cx="80" cy="300" rx="40" ry="60" fill="#c07040"/><ellipse cx="220" cy="380" rx="150" ry="170" fill="#231e1b"/><ellipse cx="240" cy="340" rx="80" ry="50" fill="#8a7868"/><ellipse cx="225" cy="460" rx="110" ry="90" fill="#101010"/><ellipse cx="180" cy="600" rx="160" ry="80" fill="#b3a48f"/><ellipse cx="445" cy="300" rx="100" ry="120" fill="#1e1a1c"/><ellipse cx="430" cy="262" rx="60" ry="25" fill="#5b3fc8"/><ellipse cx="430" cy="345" rx="70" ry="50" fill="#151515"/><ellipse cx="470" cy="510" rx="100" ry="120" fill="#9fa2c0"/><ellipse cx="520" cy="560" rx="50" ry="70" fill="#3a3040"/><ellipse cx="600" cy="420" rx="40" ry="120" fill="#2a2224"/><ellipse cx="740" cy="320" rx="140" ry="230" fill="#2a2220"/><ellipse cx="745" cy="270" rx="70" ry="70" fill="#a08878"/><ellipse cx="745" cy="430" rx="110" ry="100" fill="#0d0d0d"/><ellipse cx="870" cy="590" rx="250" ry="90" fill="#141418"/><ellipse cx="790" cy="90" rx="90" ry="60" fill="#5a3a2e"/><ellipse cx="950" cy="250" rx="80" ry="70" fill="#7ccbe8"/><ellipse cx="1000" cy="470" rx="95" ry="130" fill="#4aa2e2"/><ellipse cx="1080" cy="300" rx="40" ry="150" fill="#3a3030"/><ellipse cx="640" cy="560" rx="60" ry="70" fill="#c8b8a8"/></g></g></svg>
<svg style="left:40px;top:306px" width="50" height="36" viewBox="0 0 946 681"><defs><clipPath id="c2"><rect x="45" y="40" width="815" height="600"/></clipPath><filter id="bl2" x="-10%" y="-10%" width="120%" height="120%"><feGaussianBlur stdDeviation="26"/></filter></defs><g clip-path="url(#c2)"><rect x="0" y="0" width="946" height="681" fill="#b8b4aa"/><g filter="url(#bl2)"><path d="M45 40h815v280H45z" fill="#b9c4c6"/><path d="M200 170L440 110 700 170 440 150z" fill="#d8e2e4"/><path d="M260 60L320 180M560 60L600 170" stroke="#e0e8ea" stroke-width="30"/><rect x="520" y="200" width="120" height="130" fill="#e4ecec"/><rect x="140" y="230" width="110" height="120" fill="#d0d8d8"/><path d="M45 120L440 40 850 110" fill="none" stroke="#5a3224" stroke-width="70"/><path d="M80 220L440 120 800 210" fill="none" stroke="#6a3e2c" stroke-width="45"/><rect x="90" y="170" width="45" height="260" fill="#4a3024"/><rect x="650" y="190" width="45" height="170" fill="#4a3024"/><rect x="400" y="150" width="120" height="200" fill="#343a3a"/><path d="M45 380L380 300 380 640 45 640z" fill="#a89a86"/><path d="M230 640L400 330 520 330 460 640z" fill="#8e9090"/><ellipse cx="230" cy="340" rx="50" ry="40" fill="#6a9a50"/><ellipse cx="210" cy="360" rx="30" ry="25" fill="#e0a040"/><ellipse cx="130" cy="520" rx="90" ry="90" fill="#9a8a70"/><ellipse cx="770" cy="300" rx="60" ry="80" fill="#6a4a30"/><ellipse cx="760" cy="430" rx="100" ry="120" fill="#1f3050"/><ellipse cx="520" cy="530" rx="50" ry="90" fill="#151820"/><ellipse cx="790" cy="570" rx="80" ry="50" fill="#d8c0b0"/><ellipse cx="640" cy="560" rx="40" ry="40" fill="#d0a030"/></g></g></svg>
<svg style="left:150px;top:299px" width="34" height="43" viewBox="0 0 538 681"><defs><clipPath id="c3"><path d="M47 35h443v570c0 22-18 40-40 40H47z"/></clipPath><filter id="bl3" x="-10%" y="-10%" width="120%" height="120%"><feGaussianBlur stdDeviation="22"/></filter></defs><g clip-path="url(#c3)"><rect x="0" y="0" width="538" height="681" fill="#8a8a88"/><g filter="url(#bl3)"><rect x="47" y="35" width="443" height="230" fill="#ddd4c4"/><rect x="160" y="60" width="70" height="140" fill="#a07850"/><rect x="330" y="35" width="100" height="40" fill="#202020"/><ellipse cx="320" cy="140" rx="35" ry="35" fill="#302828"/><ellipse cx="320" cy="235" rx="70" ry="60" fill="#3a7ac0"/><ellipse cx="440" cy="160" rx="35" ry="35" fill="#302828"/><ellipse cx="440" cy="270" rx="60" ry="90" fill="#26386e"/><ellipse cx="205" cy="250" rx="60" ry="70" fill="#dcdcd4"/><ellipse cx="200" cy="160" rx="35" ry="35" fill="#403028"/><ellipse cx="300" cy="330" rx="150" ry="50" fill="#c8d0d0"/><ellipse cx="240" cy="330" rx="30" ry="20" fill="#40b080"/><ellipse cx="470" cy="400" rx="30" ry="150" fill="#e0b0a0"/><ellipse cx="90" cy="300" rx="60" ry="110" fill="#5a4030"/><ellipse cx="150" cy="510" rx="140" ry="200" fill="#3a4048"/><ellipse cx="380" cy="520" rx="130" ry="120" fill="#4e5256"/><path d="M230 530L330 640" stroke="#c08a40" stroke-width="30"/><ellipse cx="400" cy="580" rx="30" ry="20" fill="#e07060"/><ellipse cx="420" cy="520" rx="40" ry="15" fill="#ddd"/></g></g></svg>
<div class="t" style="left:54.00px;top:295.98px;font-family:'Liberation Sans';font-size:9px;font-weight:normal;color:#f3f8ef;transform:scaleX(1.0165);-webkit-text-stroke:0.2px #f3f8ef;">Welcome, returning and new</div>
<div class="t" style="left:91.70px;top:307.28px;font-family:'Liberation Sans';font-size:9px;font-weight:normal;color:#f3f8ef;transform:scaleX(1.0150);-webkit-text-stroke:0.2px #f3f8ef;">members!</div>
<div class="a" style="left:112px;top:357.2px;width:69.4px;height:78.9px;background:#acd998;border-radius:0 3px 3px 0"></div>
<div class="t" style="left:66.25px;top:393.58px;font-family:'Liberation Serif';font-size:9px;font-weight:normal;color:#a6d68f;transform:scaleX(0.9773);-webkit-text-stroke:0.25px #a6d68f;">Emily</div>
<div class="t" style="left:65.75px;top:404.95px;font-family:'Liberation Sans';font-size:3.6px;font-weight:normal;color:#555;transform:scaleX(1.1190);">Co-President</div>
<div class="t" style="left:63.10px;top:409.85px;font-family:'Liberation Sans';font-size:3.6px;font-weight:normal;color:#555;transform:scaleX(1.1583);">(Tell about you)</div>
<div class="t" style="left:118.90px;top:396.48px;font-family:'Liberation Sans';font-size:3.8px;font-weight:normal;color:#ffffff;transform:scaleX(0.9667);">[Photo]</div>
<div class="a" style="left:118.9px;top:425.79999999999995px;width:7.6px;height:.6px;background:#d4ebc8"></div>
<div class="a" style="left:112px;top:453.0px;width:69.4px;height:78.9px;background:#acd998;border-radius:0 3px 3px 0"></div>
<div class="t" style="left:56.75px;top:489.38px;font-family:'Liberation Serif';font-size:9px;font-weight:normal;color:#a6d68f;transform:scaleX(1.0125);-webkit-text-stroke:0.25px #a6d68f;">Dean/Atlas</div>
<div class="t" style="left:65.75px;top:500.75px;font-family:'Liberation Sans';font-size:3.6px;font-weight:normal;color:#555;transform:scaleX(1.1190);">Co-President</div>
<div class="t" style="left:63.10px;top:505.65px;font-family:'Liberation Sans';font-size:3.6px;font-weight:normal;color:#555;transform:scaleX(1.1583);">(Tell about you)</div>
<div class="t" style="left:118.90px;top:492.28px;font-family:'Liberation Sans';font-size:3.8px;font-weight:normal;color:#ffffff;transform:scaleX(0.9667);">[Photo]</div>
<div class="a" style="left:118.9px;top:521.6px;width:7.6px;height:.6px;background:#d4ebc8"></div>
<div class="a" style="left:112px;top:549.0999999999999px;width:69.4px;height:78.9px;background:#acd998;border-radius:0 3px 3px 0"></div>
<div class="t" style="left:61.00px;top:585.48px;font-family:'Liberation Serif';font-size:9px;font-weight:normal;color:#a6d68f;transform:scaleX(1.2308);-webkit-text-stroke:0.25px #a6d68f;">Caitlyn</div>
<div class="t" style="left:65.75px;top:596.85px;font-family:'Liberation Sans';font-size:3.6px;font-weight:normal;color:#555;transform:scaleX(1.1190);">Co-President</div>
<div class="t" style="left:63.10px;top:601.75px;font-family:'Liberation Sans';font-size:3.6px;font-weight:normal;color:#555;transform:scaleX(1.1583);">(Tell about you)</div>
<div class="t" style="left:118.90px;top:588.38px;font-family:'Liberation Sans';font-size:3.8px;font-weight:normal;color:#ffffff;transform:scaleX(0.9667);">[Photo]</div>
<div class="a" style="left:118.9px;top:617.6999999999999px;width:7.6px;height:.6px;background:#d4ebc8"></div>
<div class="a" style="left:0;top:600px;width:205px;height:38px;background:#fff;border-top:1px solid #dadce0"></div>
<div class="a" style="left:22.5px;top:601px;width:45px;height:2.2px;background:#202124"></div>
<svg style="left:36.6px;top:614.4px" width="13.4" height="9.4" viewBox="0 0 13.4 9.4"><rect x="0" y="0" width="3.2" height="9.4" fill="#202124"/><rect x="4.4" y="0" width="9" height="4" fill="#202124"/><rect x="4.4" y="5.4" width="9" height="4" fill="#202124"/></svg>
<svg style="left:126.6px;top:614.4px" width="13.4" height="10.3" viewBox="0 0 13.4 10.3"><g fill="#5f6368"><rect x="0" y="0" width="3.8" height="3" /><rect x="4.8" y="0" width="3.8" height="3"/><rect x="9.6" y="0" width="3.8" height="3"/><rect x="0" y="3.65" width="3.8" height="3"/><rect x="4.8" y="3.65" width="3.8" height="3"/><rect x="9.6" y="3.65" width="3.8" height="3"/><rect x="0" y="7.3" width="3.8" height="3"/><rect x="4.8" y="7.3" width="3.8" height="3"/><rect x="9.6" y="7.3" width="3.8" height="3"/></g></svg>
<div class="a" style="left:181.2px;top:607.1px;width:22px;height:22px;border-radius:11px;background:#f1f3f4"></div>
<svg style="left:187px;top:612px" width="10" height="12" viewBox="0 0 10 12"><path d="M7.5 1.5L3 6l4.5 4.5" fill="none" stroke="#5f6368" stroke-width="1.8"/></svg>
<div class="a" style="left:206px;top:157px;width:1023px;height:12px;background:#e8eaed"></div>
<div class="a" style="left:206px;top:157px;width:13px;height:12px;background:#f8f9fa"></div>
<div class="a" style="left:412px;top:157px;width:626px;height:12px;background:#fff"></div>
<div class="a" style="left:206px;top:169px;width:13px;height:384px;background:#e8eaed"></div>
<div class="a" style="left:206px;top:187.5px;width:13px;height:350.5px;background:#fff"></div>
<div class="t" style="left:471.15px;top:163.73px;font-family:'Liberation Sans';font-size:10px;font-weight:normal;color:#3c4043;transform:scaleX(0.8667);-webkit-text-stroke:0.3px #3c4043;">1</div>
<div class="t" style="left:533.85px;top:163.73px;font-family:'Liberation Sans';font-size:10px;font-weight:normal;color:#3c4043;transform:scaleX(0.8667);-webkit-text-stroke:0.3px #3c4043;">2</div>
<div class="t" style="left:596.55px;top:163.73px;font-family:'Liberation Sans';font-size:10px;font-weight:normal;color:#3c4043;transform:scaleX(0.8667);-webkit-text-stroke:0.3px #3c4043;">3</div>
<div class="t" style="left:659.25px;top:163.73px;font-family:'Liberation Sans';font-size:10px;font-weight:normal;color:#3c4043;transform:scaleX(0.8667);-webkit-text-stroke:0.3px #3c4043;">4</div>
<div class="t" style="left:721.95px;top:163.73px;font-family:'Liberation Sans';font-size:10px;font-weight:normal;color:#3c4043;transform:scaleX(0.8667);-webkit-text-stroke:0.3px #3c4043;">5</div>
<div class="t" style="left:784.65px;top:163.73px;font-family:'Liberation Sans';font-size:10px;font-weight:normal;color:#3c4043;transform:scaleX(0.8667);-webkit-text-stroke:0.3px #3c4043;">6</div>
<div class="t" style="left:847.35px;top:163.73px;font-family:'Liberation Sans';font-size:10px;font-weight:normal;color:#3c4043;transform:scaleX(0.8667);-webkit-text-stroke:0.3px #3c4043;">7</div>
<div class="t" style="left:910.05px;top:163.73px;font-family:'Liberation Sans';font-size:10px;font-weight:normal;color:#3c4043;transform:scaleX(0.8667);-webkit-text-stroke:0.3px #3c4043;">8</div>
<div class="t" style="left:972.75px;top:163.73px;font-family:'Liberation Sans';font-size:10px;font-weight:normal;color:#3c4043;transform:scaleX(0.8667);-webkit-text-stroke:0.3px #3c4043;">9</div>
<div class="a" style="left:418.39px;top:161.5px;width:1px;height:3px;background:#b3b7bb"></div><div class="a" style="left:426.23px;top:161.5px;width:1px;height:3px;background:#b3b7bb"></div><div class="a" style="left:434.06px;top:161.5px;width:1px;height:3px;background:#b3b7bb"></div><div class="a" style="left:441.90px;top:159px;width:1px;height:7px;background:#80868b"></div><div class="a" style="left:449.74px;top:161.5px;width:1px;height:3px;background:#b3b7bb"></div><div class="a" style="left:457.58px;top:161.5px;width:1px;height:3px;background:#b3b7bb"></div><div class="a" style="left:465.41px;top:161.5px;width:1px;height:3px;background:#b3b7bb"></div><div class="a" style="left:481.09px;top:161.5px;width:1px;height:3px;background:#b3b7bb"></div><div class="a" style="left:488.93px;top:161.5px;width:1px;height:3px;background:#b3b7bb"></div><div class="a" style="left:496.76px;top:161.5px;width:1px;height:3px;background:#b3b7bb"></div><div class="a" style="left:504.60px;top:159px;width:1px;height:7px;background:#80868b"></div><div class="a" style="left:512.44px;top:161.5px;width:1px;height:3px;background:#b3b7bb"></div><div class="a" style="left:520.27px;top:161.5px;width:1px;height:3px;background:#b3b7bb"></div><div class="a" style="left:528.11px;top:161.5px;width:1px;height:3px;background:#b3b7bb"></div><div class="a" style="left:543.79px;top:161.5px;width:1px;height:3px;background:#b3b7bb"></div><div class="a" style="left:551.62px;top:161.5px;width:1px;height:3px;background:#b3b7bb"></div><div class="a" style="left:559.46px;top:161.5px;width:1px;height:3px;background:#b3b7bb"></div><div class="a" style="left:567.30px;top:159px;width:1px;height:7px;background:#80868b"></div><div class="a" style="left:575.14px;top:161.5px;width:1px;height:3px;background:#b3b7bb"></div><div class="a" style="left:582.98px;top:161.5px;width:1px;height:3px;background:#b3b7bb"></div><div class="a" style="left:590.81px;top:161.5px;width:1px;height:3px;background:#b3b7bb"></div><div class="a" style="left:606.49px;top:161.5px;width:1px;height:3px;background:#b3b7bb"></div><div class="a" style="left:614.33px;top:161.5px;width:1px;height:3px;background:#b3b7bb"></div><div class="a" style="left:622.16px;top:161.5px;width:1px;height:3px;background:#b3b7bb"></div><div class="a" style="left:630.00px;top:159px;width:1px;height:7px;background:#80868b"></div><div class="a" style="left:637.84px;top:161.5px;width:1px;height:3px;background:#b3b7bb"></div><div class="a" style="left:645.67px;top:161.5px;width:1px;height:3px;background:#b3b7bb"></div><div class="a" style="left:653.51px;top:161.5px;width:1px;height:3px;background:#b3b7bb"></div><div class="a" style="left:669.19px;top:161.5px;width:1px;height:3px;background:#b3b7bb"></div><div class="a" style="left:677.03px;top:161.5px;width:1px;height:3px;background:#b3b7bb"></div><div class="a" style="left:684.86px;top:161.5px;width:1px;height:3px;background:#b3b7bb"></div><div class="a" style="left:692.70px;top:159px;width:1px;height:7px;background:#80868b"></div><div class="a" style="left:700.54px;top:161.5px;width:1px;height:3px;background:#b3b7bb"></div><div class="a" style="left:708.38px;top:161.5px;width:1px;height:3px;background:#b3b7bb"></div><div class="a" style="left:716.21px;top:161.5px;width:1px;height:3px;background:#b3b7bb"></div><div class="a" style="left:731.89px;top:161.5px;width:1px;height:3px;background:#b3b7bb"></div><div class="a" style="left:739.73px;top:161.5px;width:1px;height:3px;background:#b3b7bb"></div><div class="a" style="left:747.56px;top:161.5px;width:1px;height:3px;background:#b3b7bb"></div><div class="a" style="left:755.40px;top:159px;width:1px;height:7px;background:#80868b"></div><div class="a" style="left:763.24px;top:161.5px;width:1px;height:3px;background:#b3b7bb"></div><div class="a" style="left:771.08px;top:161.5px;width:1px;height:3px;background:#b3b7bb"></div><div class="a" style="left:778.91px;top:161.5px;width:1px;height:3px;background:#b3b7bb"></div><div class="a" style="left:794.59px;top:161.5px;width:1px;height:3px;background:#b3b7bb"></div><div class="a" style="left:802.42px;top:161.5px;width:1px;height:3px;background:#b3b7bb"></div><div class="a" style="left:810.26px;top:161.5px;width:1px;height:3px;background:#b3b7bb"></div><div class="a" style="left:818.10px;top:159px;width:1px;height:7px;background:#80868b"></div><div class="a" style="left:825.94px;top:161.5px;width:1px;height:3px;background:#b3b7bb"></div><div class="a" style="left:833.78px;top:161.5px;width:1px;height:3px;background:#b3b7bb"></div><div class="a" style="left:841.61px;top:161.5px;width:1px;height:3px;background:#b3b7bb"></div><div class="a" style="left:857.29px;top:161.5px;width:1px;height:3px;background:#b3b7bb"></div><div class="a" style="left:865.12px;top:161.5px;width:1px;height:3px;background:#b3b7bb"></div><div class="a" style="left:872.96px;top:161.5px;width:1px;height:3px;background:#b3b7bb"></div><div class="a" style="left:880.80px;top:159px;width:1px;height:7px;background:#80868b"></div><div class="a" style="left:888.64px;top:161.5px;width:1px;height:3px;background:#b3b7bb"></div><div class="a" style="left:896.48px;top:161.5px;width:1px;height:3px;background:#b3b7bb"></div><div class="a" style="left:904.31px;top:161.5px;width:1px;height:3px;background:#b3b7bb"></div><div class="a" style="left:919.99px;top:161.5px;width:1px;height:3px;background:#b3b7bb"></div><div class="a" style="left:927.83px;top:161.5px;width:1px;height:3px;background:#b3b7bb"></div><div class="a" style="left:935.66px;top:161.5px;width:1px;height:3px;background:#b3b7bb"></div><div class="a" style="left:943.50px;top:159px;width:1px;height:7px;background:#80868b"></div><div class="a" style="left:951.34px;top:161.5px;width:1px;height:3px;background:#b3b7bb"></div><div class="a" style="left:959.17px;top:161.5px;width:1px;height:3px;background:#b3b7bb"></div><div class="a" style="left:967.01px;top:161.5px;width:1px;height:3px;background:#b3b7bb"></div><div class="a" style="left:982.69px;top:161.5px;width:1px;height:3px;background:#b3b7bb"></div><div class="a" style="left:990.53px;top:161.5px;width:1px;height:3px;background:#b3b7bb"></div><div class="a" style="left:998.36px;top:161.5px;width:1px;height:3px;background:#b3b7bb"></div><div class="a" style="left:1006.20px;top:159px;width:1px;height:7px;background:#80868b"></div><div class="a" style="left:1014.04px;top:161.5px;width:1px;height:3px;background:#b3b7bb"></div><div class="a" style="left:1021.88px;top:161.5px;width:1px;height:3px;background:#b3b7bb"></div><div class="a" style="left:1029.71px;top:161.5px;width:1px;height:3px;background:#b3b7bb"></div><div class="a" style="left:211.2px;top:193.94px;width:2.8px;height:1px;background:#b3b7bb"></div><div class="a" style="left:211.2px;top:201.78px;width:2.8px;height:1px;background:#b3b7bb"></div><div class="a" style="left:211.2px;top:209.61px;width:2.8px;height:1px;background:#b3b7bb"></div><div class="a" style="left:209.2px;top:217.45px;width:6.7px;height:1px;background:#80868b"></div><div class="a" style="left:211.2px;top:225.29px;width:2.8px;height:1px;background:#b3b7bb"></div><div class="a" style="left:211.2px;top:233.12px;width:2.8px;height:1px;background:#b3b7bb"></div><div class="a" style="left:211.2px;top:240.96px;width:2.8px;height:1px;background:#b3b7bb"></div><div class="a" style="left:209px;top:245.00px;width:8px;height:6px;"><div style="position:absolute;left:0;top:0;width:8px;height:6px;transform:rotate(-90deg);transform-origin:4px 3px;font:10px 'Liberation Sans';color:#3c4043;line-height:6px;text-align:center">1</div></div><div class="a" style="left:211.2px;top:256.64px;width:2.8px;height:1px;background:#b3b7bb"></div><div class="a" style="left:211.2px;top:264.48px;width:2.8px;height:1px;background:#b3b7bb"></div><div class="a" style="left:211.2px;top:272.31px;width:2.8px;height:1px;background:#b3b7bb"></div><div class="a" style="left:209.2px;top:280.15px;width:6.7px;height:1px;background:#80868b"></div><div class="a" style="left:211.2px;top:287.99px;width:2.8px;height:1px;background:#b3b7bb"></div><div class="a" style="left:211.2px;top:295.82px;width:2.8px;height:1px;background:#b3b7bb"></div><div class="a" style="left:211.2px;top:303.66px;width:2.8px;height:1px;background:#b3b7bb"></div><div class="a" style="left:209px;top:307.70px;width:8px;height:6px;"><div style="position:absolute;left:0;top:0;width:8px;height:6px;transform:rotate(-90deg);transform-origin:4px 3px;font:10px 'Liberation Sans';color:#3c4043;line-height:6px;text-align:center">2</div></div><div class="a" style="left:211.2px;top:319.34px;width:2.8px;height:1px;background:#b3b7bb"></div><div class="a" style="left:211.2px;top:327.18px;width:2.8px;height:1px;background:#b3b7bb"></div><div class="a" style="left:211.2px;top:335.01px;width:2.8px;height:1px;background:#b3b7bb"></div><div class="a" style="left:209.2px;top:342.85px;width:6.7px;height:1px;background:#80868b"></div><div class="a" style="left:211.2px;top:350.69px;width:2.8px;height:1px;background:#b3b7bb"></div><div class="a" style="left:211.2px;top:358.52px;width:2.8px;height:1px;background:#b3b7bb"></div><div class="a" style="left:211.2px;top:366.36px;width:2.8px;height:1px;background:#b3b7bb"></div><div class="a" style="left:209px;top:370.40px;width:8px;height:6px;"><div style="position:absolute;left:0;top:0;width:8px;height:6px;transform:rotate(-90deg);transform-origin:4px 3px;font:10px 'Liberation Sans';color:#3c4043;line-height:6px;text-align:center">3</div></div><div class="a" style="left:211.2px;top:382.04px;width:2.8px;height:1px;background:#b3b7bb"></div><div class="a" style="left:211.2px;top:389.88px;width:2.8px;height:1px;background:#b3b7bb"></div><div class="a" style="left:211.2px;top:397.71px;width:2.8px;height:1px;background:#b3b7bb"></div><div class="a" style="left:209.2px;top:405.55px;width:6.7px;height:1px;background:#80868b"></div><div class="a" style="left:211.2px;top:413.39px;width:2.8px;height:1px;background:#b3b7bb"></div><div class="a" style="left:211.2px;top:421.23px;width:2.8px;height:1px;background:#b3b7bb"></div><div class="a" style="left:211.2px;top:429.06px;width:2.8px;height:1px;background:#b3b7bb"></div><div class="a" style="left:209px;top:433.10px;width:8px;height:6px;"><div style="position:absolute;left:0;top:0;width:8px;height:6px;transform:rotate(-90deg);transform-origin:4px 3px;font:10px 'Liberation Sans';color:#3c4043;line-height:6px;text-align:center">4</div></div><div class="a" style="left:211.2px;top:444.74px;width:2.8px;height:1px;background:#b3b7bb"></div><div class="a" style="left:211.2px;top:452.58px;width:2.8px;height:1px;background:#b3b7bb"></div><div class="a" style="left:211.2px;top:460.41px;width:2.8px;height:1px;background:#b3b7bb"></div><div class="a" style="left:209.2px;top:468.25px;width:6.7px;height:1px;background:#80868b"></div><div class="a" style="left:211.2px;top:476.09px;width:2.8px;height:1px;background:#b3b7bb"></div><div class="a" style="left:211.2px;top:483.92px;width:2.8px;height:1px;background:#b3b7bb"></div><div class="a" style="left:211.2px;top:491.76px;width:2.8px;height:1px;background:#b3b7bb"></div><div class="a" style="left:209px;top:495.80px;width:8px;height:6px;"><div style="position:absolute;left:0;top:0;width:8px;height:6px;transform:rotate(-90deg);transform-origin:4px 3px;font:10px 'Liberation Sans';color:#3c4043;line-height:6px;text-align:center">5</div></div><div class="a" style="left:211.2px;top:507.44px;width:2.8px;height:1px;background:#b3b7bb"></div><div class="a" style="left:211.2px;top:515.27px;width:2.8px;height:1px;background:#b3b7bb"></div><div class="a" style="left:211.2px;top:523.11px;width:2.8px;height:1px;background:#b3b7bb"></div><div class="a" style="left:209.2px;top:530.95px;width:6.7px;height:1px;background:#80868b"></div>
<div class="a" style="left:219px;top:169px;width:1010px;height:1px;background:#e8eaed"></div>
<div class="a" style="left:219px;top:170px;width:1010px;height:383px;background:#f8f9fa"></div>
<div class="a" style="left:411px;top:186px;width:627px;height:352px;background:#fff;box-shadow:0 0 0 1px #e6e7e9,0 1px 3px rgba(60,64,67,.25)"></div>
<div class="a" style="left:600px;top:238px;width:250px;height:249px;background:#acd998"></div>
<div class="a" style="left:615px;top:253px;width:220px;height:219px;border:2px solid #fff"></div>
<div class="t" style="left:632.27px;top:347.44px;font-family:'Liberation Sans';font-size:27.6px;font-weight:normal;color:#fff;transform:scaleX(0.9757);-webkit-text-stroke:1px #fff;">EC Introduction</div>
<div class="t" style="left:660.02px;top:377.64px;font-family:'Liberation Sans';font-size:27.6px;font-weight:normal;color:#fff;transform:scaleX(0.9883);-webkit-text-stroke:1px #fff;">2022-2023</div>
<svg style="left:1247.5px;top:137.5px" width="17.5" height="17.5" viewBox="0 0 200 200"><rect x="0" y="0" width="200" height="200" rx="22" fill="#4285f4"/><rect x="152" y="48" width="48" height="104" fill="#fbbc04"/><rect x="48" y="152" width="104" height="48" fill="#34a853"/><path d="M0 152h48v48H22C10 200 0 190 0 178z" fill="#188038"/><path d="M152 0h26c12 0 22 10 22 22v26h-48z" fill="#1967d2"/><path d="M152 152h48l-48 48z" fill="#ea4335"/><rect x="48" y="48" width="104" height="104" fill="#fff"/><text x="100" y="130" font-size="72" font-weight="bold" font-family="Liberation Sans" fill="#4285f4" text-anchor="middle">31</text></svg>
<svg style="left:1247.5px;top:189.6px" width="17.6" height="18.1" viewBox="0 0 17.6 18.1"><rect width="17.6" height="18.1" rx="1.8" fill="#fbbc04"/><circle cx="8.8" cy="7.9" r="3.4" fill="#fff"/><rect x="7.2" y="10.5" width="3.2" height="2.8" fill="#fff"/></svg>
<svg style="left:1241px;top:238px" width="30" height="30" viewBox="0 0 681 681"><circle cx="350" cy="300" r="148" fill="none" stroke="#1a73e8" stroke-width="58"/><path d="M295 285l55 50 95-100" fill="none" stroke="#1a73e8" stroke-width="50"/><circle cx="500" cy="180" r="42" fill="#1a73e8"/><path d="M440 140l90 80" stroke="#fff" stroke-width="0"/></svg>
<svg style="left:1241px;top:289px" width="30" height="30" viewBox="0 0 681 681"><circle cx="350" cy="335" r="195" fill="#1a73e8"/><circle cx="350" cy="280" r="42" fill="#fff"/><path d="M270 435v-20c0-35 50-55 80-55s80 20 80 55v20z" fill="#fff"/></svg>
<svg style="left:1241px;top:341px" width="30" height="30" viewBox="0 0 681 681"><path d="M355 520C320 440 230 390 230 295a125 125 0 0 1 250 0c0 95-90 145-125 225z" fill="#34a853"/><path d="M268 208A125 125 0 0 1 470 250L355 290z" fill="#1a73e8"/><path d="M268 208L355 290 250 390C235 360 230 330 230 295c0-35 14-63 38-87z" fill="#ea4335"/><path d="M250 390L355 290 300 440C280 420 262 410 250 390z" fill="#fbbc04"/><circle cx="355" cy="292" r="40" fill="#fff"/></svg>
<div class="a" style="left:1247px;top:398px;width:19px;height:1px;background:#dadce0"></div>
<svg style="left:1250.5px;top:434px" width="12" height="12" viewBox="0 0 12 12"><path d="M6 0.5v11M0.5 6h11" stroke="#5f6368" stroke-width="1.5"/></svg>
<svg style="left:1251.5px;top:605.5px" width="9" height="12" viewBox="0 0 9 12"><path d="M2 1.5l4.5 4.5L2 10.5" fill="none" stroke="#5f6368" stroke-width="1.8"/></svg>
<div class="a" style="left:206px;top:553px;width:1023px;height:1px;background:#e3e5e8"></div>
<div class="a" style="left:206px;top:562px;width:1023px;height:1px;background:#dadce0"></div>
<div class="a" style="left:708.3px;top:556px;width:4px;height:4px;border-radius:2px;background:#dadce0"></div>
<div class="a" style="left:715.9px;top:556px;width:4px;height:4px;border-radius:2px;background:#dadce0"></div>
<div class="a" style="left:723.3px;top:556px;width:4px;height:4px;border-radius:2px;background:#dadce0"></div>
<div class="t" style="left:221.50px;top:580.45px;font-family:'Liberation Sans';font-size:14px;font-weight:normal;color:#202124;transform:scaleX(0.9842);">Click to add speaker notes</div>
<div class="a" style="left:1121px;top:596px;width:93px;height:35px;border-radius:4px;border:1px solid #dadce0;background:#f8f9fa"></div>
<svg style="left:1133.6px;top:604px" width="17" height="19.5" viewBox="0 0 17 19.5"><path d="M1.8 0h13.4c1 0 1.8.8 1.8 1.8v13c0 1-.8 1.8-1.8 1.8H10.5L8.5 19 6.5 16.6H1.8C.8 16.6 0 15.8 0 14.8v-13C0 .8.8 0 1.8 0z" fill="#f9ab00"/><path d="M8.5 3.4C9.1 7.2 9.8 7.9 13.6 8.5 9.8 9.1 9.1 9.8 8.5 13.6 7.9 9.8 7.2 9.1 3.4 8.5 7.2 7.9 7.9 7.2 8.5 3.4z" fill="#fff" stroke="#fff" stroke-width=".6" stroke-linejoin="round"/></svg>
<div class="t" style="left:1161.50px;top:614.39px;font-family:'Liberation Sans';font-size:11px;font-weight:normal;color:#5f6368;transform:scaleX(1.0135);-webkit-text-stroke:0.3px #5f6368;">Explore</div>
<div class="a" style="left:0;top:638px;width:1280px;height:43px;background:#202124"></div>
<div class="a" style="left:1134px;top:643px;width:142px;height:34px;border-radius:17px;background:#3b3c3f"></div>
<div class="a" style="left:5.5px;top:643.3px;width:34px;height:34px;border-radius:17px;background:#3a3b3e"></div>
<div class="a" style="left:16px;top:653.8px;width:13px;height:13px;border-radius:7px;border:2px solid #fff"></div>
<svg style="left:521.5px;top:645px" width="31" height="31" viewBox="0 0 48 48"><path d="M3.22 12.00A24 24 0 0 1 44.78 12.00L24.00 12.00A12 12 0 0 0 13.61 30.00z" fill="#db4437"/><path d="M44.78 12.00A24 24 0 0 1 24.00 48.00L34.39 30.00A12 12 0 0 0 24.00 12.00z" fill="#fcc934"/><path d="M24.00 48.00A24 24 0 0 1 3.22 12.00L13.61 30.00A12 12 0 0 0 34.39 30.00z" fill="#1e8e3e"/><circle cx="24" cy="24" r="11" fill="#fff"/><circle cx="24" cy="24" r="8.8" fill="#4285f4"/></svg>
<div class="a" style="left:573.2px;top:644.8px;width:31px;height:31px;border-radius:16px;background:#fff"></div>
<svg style="left:578.7px;top:652px" width="20" height="16" viewBox="0 0 20 16"><path d="M0 2.5v11.8c0 .9.7 1.7 1.6 1.7h3V8.3L10 12.4l5.4-4.1V16h3c.9 0 1.6-.8 1.6-1.7V2.5C20 .7 18 -.4 16.6.7L10 5.6 3.4.7C2 -.4 0 .7 0 2.5z" fill="#ea4335"/><path d="M0 2.5v11.8c0 .9.7 1.7 1.6 1.7h3V5.8L0 2.5z" fill="#4285f4"/><path d="M15.4 5.8V16h3c.9 0 1.6-.8 1.6-1.7V2.5z" fill="#34a853"/><path d="M15.4 2.2v3.6L20 2.5C20 .7 18-.4 16.6.7z" fill="#fbbc04"/><path d="M0 2.5l4.6 3.3V2.2L3.4.7C2-.4 0 .7 0 2.5z" fill="#c5221f"/></svg>
<div class="a" style="left:625.9px;top:644.8px;width:31px;height:31px;border-radius:16px;background:#fff"></div>
<svg style="left:634.5px;top:650.5px" width="14" height="19" viewBox="0 0 14 19"><path d="M1.4 0h7.6L14 5v12.6c0 .8-.6 1.4-1.4 1.4H1.4C.6 19 0 18.4 0 17.6V1.4C0 .6.6 0 1.4 0z" fill="#4285f4"/><path d="M9 0l5 5H9z" fill="#a1c2fa"/><path d="M3.5 9.2h7M3.5 11.4h7M3.5 13.6h7M3.5 15.8h4.5" stroke="#f1f1f1" stroke-width=".9"/></svg>
<div class="a" style="left:678.7px;top:644.8px;width:31px;height:31px;border-radius:16px;background:#fff"></div>
<svg style="left:686.5px;top:651px" width="17" height="19" viewBox="0 0 17 19"><path d="M1 .6L10.3 9.5 1 18.4C.6 18.2.4 17.8.4 17.3V1.7C.4 1.2.6.8 1 .6z" fill="#00c3ff"/><path d="M1 .6c.3-.2.8-.2 1.2 0L13.3 6.8 10.3 9.5z" fill="#00f076"/><path d="M10.3 9.5l3 2.7L2.2 18.4c-.4.2-.9.2-1.2 0z" fill="#ff3a44"/><path d="M13.3 6.8l3 1.7c.7.4.7 1.6 0 2L13.3 12.2 10.3 9.5z" fill="#ffd500"/></svg>
<div class="a" style="left:730.8px;top:644.8px;width:31px;height:31px;border-radius:16px;background:#fff"></div>
<svg style="left:738px;top:648px" width="17" height="25" viewBox="0 0 17 25"><defs><linearGradient id="mg" x1="0" x2="1"><stop offset="0" stop-color="#555"/><stop offset=".45" stop-color="#ddd"/><stop offset="1" stop-color="#444"/></linearGradient></defs><rect x="4.5" y="0.5" width="8" height="13" rx="4" fill="url(#mg)"/><path d="M4.5 4h8M4.5 6h8M4.5 8h8M4.5 10h8" stroke="#666" stroke-width=".5"/><path d="M2.5 9.5c0 4 2.5 6.5 6 6.5s6-2.5 6-6.5" fill="none" stroke="#777" stroke-width="1.2"/><rect x="7.8" y="16" width="1.4" height="5" fill="#777"/><ellipse cx="8.5" cy="22" rx="5" ry="1.3" fill="#888"/></svg>
<div class="a" style="left:532px;top:678.5px;width:9.6px;height:2.5px;background:#fff;border-radius:1px"></div>
<div class="a" style="left:587px;top:678.5px;width:3.5px;height:2.5px;background:#fff;border-radius:1px"></div>
<svg style="left:1060px;top:640px" width="70" height="40" viewBox="0 0 1192 681"><defs><clipPath id="hc1"><circle cx="345" cy="340" r="255"/></clipPath><clipPath id="hc2"><circle cx="600" cy="340" r="255"/></clipPath><g id="card"><rect x="0" y="0" width="1192" height="681" fill="#fff"/><rect x="0" y="0" width="1192" height="200" fill="#2c5aa0"/><circle cx="340" cy="190" r="50" fill="#999"/><path d="M300 160l40-30 40 30" stroke="#e33" stroke-width="22" fill="none"/><path d="M300 215l40 20 45-25" stroke="#3a3" stroke-width="22" fill="none"/><circle cx="385" cy="180" r="15" fill="#fc3"/><circle cx="300" cy="195" r="15" fill="#3cf"/><g fill="#6a8cc8"><rect x="240" y="258" width="50" height="22"/><rect x="310" y="258" width="60" height="22"/><rect x="420" y="258" width="40" height="22"/></g><g fill="#888"><rect x="180" y="305" width="140" height="22"/><rect x="350" y="305" width="50" height="22"/><rect x="430" y="305" width="70" height="22"/></g><path d="M250 415h60l40-30 30 30h60" stroke="#111" stroke-width="18" fill="none"/><g fill="#7a9ad0"><rect x="180" y="444" width="120" height="12"/><rect x="320" y="444" width="30" height="12"/><rect x="380" y="444" width="100" height="12"/></g><rect x="390" y="515" width="70" height="18" fill="#555"/><rect x="0" y="555" width="1192" height="40" fill="#e8e8e8"/><g><rect x="200" y="555" width="40" height="40" fill="#f4c020"/><rect x="240" y="555" width="40" height="40" fill="#e23c8c"/><rect x="280" y="555" width="40" height="40" fill="#3cb4e6"/><rect x="320" y="555" width="40" height="40" fill="#f08020"/><rect x="360" y="555" width="40" height="40" fill="#c02a8a"/><rect x="400" y="555" width="40" height="40" fill="#f4d020"/></g></g></defs><rect x="65" y="65" width="1065" height="545" rx="272" fill="#202124" stroke="#3a3b3e" stroke-width="30"/><rect x="830" y="250" width="120" height="190" rx="20" fill="none" stroke="#e57368" stroke-width="32"/><g clip-path="url(#hc1)"><use href="#card"/></g><circle cx="600" cy="340" r="262" fill="rgba(0,0,0,.15)"/><g clip-path="url(#hc2)"><use href="#card" transform="translate(255,0)"/></g></svg>
<svg style="left:1146.5px;top:652.5px" width="16" height="16" viewBox="0 0 16 16"><circle cx="7.7" cy="7.7" r="7.5" fill="#e8eaed"/><path d="M8.6 12V3.6H7.9L5.6 4.6v1.1l1.7-.6V12z" fill="#202124"/></svg>
<svg style="left:1192px;top:654px" width="15" height="12" viewBox="0 0 15 12"><path d="M7.5 11.8L0 2.6C2 1 4.6 0 7.5 0S13 1 15 2.6z" fill="#e8eaed"/></svg>
<svg style="left:1215px;top:652.5px" width="9" height="15" viewBox="0 0 9 15"><rect x="2.8" y="0" width="3.4" height="1.8" fill="#e8eaed"/><rect x="0.3" y="1.5" width="8.4" height="13.3" rx="1" fill="#e8eaed"/><rect x="1.8" y="3" width="5.4" height="2.2" fill="#3b3c3f"/></svg>
<div class="t" style="left:1167.67px;top:660.82px;font-family:'Liberation Sans';font-size:13.5px;font-weight:normal;color:#e8eaed;transform:scaleX(0.9294);-webkit-text-stroke:0.3px #e8eaed;">US</div>
<div class="t" style="left:1230.80px;top:660.82px;font-family:'Liberation Sans';font-size:13.5px;font-weight:normal;color:#e8eaed;transform:scaleX(0.9970);-webkit-text-stroke:0.3px #e8eaed;">10:04</div></body></html>
